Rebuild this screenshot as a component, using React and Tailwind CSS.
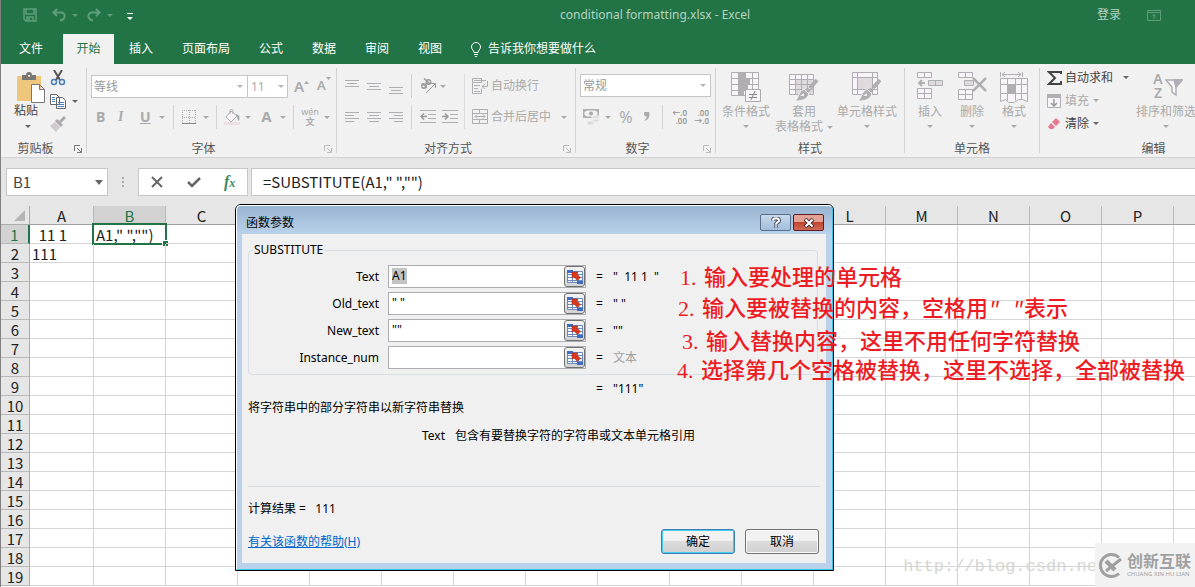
import clsx from "clsx";

const columns = "ABCDEFGHIJKLMNOPQRSTUVWXYZ".split("");
const rows = Array.from({ length: 19 }, (_, i) => i + 1);
const cells = { A1: "  11 1", B1: 'A1," ","")', A2: "111" };

const tabs = ["插入", "页面布局", "公式", "数据", "审阅", "视图"];

const args = [
    { id: "text", label: "Text", value: "A1", result: '"  11 1  "', selected: true },
    { id: "old_text", label: "Old_text", value: '" "', result: '" "' },
    { id: "new_text", label: "New_text", value: '""', result: '""' },
    { id: "instance_num", label: "Instance_num", value: "", result: "文本", muted: true },
];

const Caret = ({ className }) => (
    <svg className={clsx("shrink-0", className)} width="6" height="3" viewBox="0 0 6 3" fill="currentColor">
        <path d="M0 0h6L3 3z" />
    </svg>
);

const Sep = ({ className }) => <span className={clsx("w-px h-6 shrink-0 bg-[#d2d2d2]", className)} />;

const Icon = ({ w = 16, h = 16, children, className }) => (
    <svg className={clsx("shrink-0", className)} width={w} height={h} viewBox={`0 0 ${w} ${h}`} fill="none" stroke="#b0aeb2">
        {children}
    </svg>
);

const Tool = ({ label, className, children }) => (
    <button aria-label={label} className={clsx("flex items-center shrink-0", className)}>{children}</button>
);

function Group({ title, className, launcher, children }) {
    return (
        <section className={clsx("relative flex flex-col shrink-0 mt-1 h-[85px] whitespace-nowrap border-r border-[#d2d2d2]", className)}>
            <div className="h-[73px] shrink-0">{children}</div>
            <h2 className={clsx("text-center leading-4 text-[#555]", launcher && "pr-4")}>{title}</h2>
            {launcher && (
                <button aria-label={`${title}设置`} className="absolute right-1 bottom-0">
                    <svg width="8" height="8" viewBox="0 0 8 8" fill="none" stroke={launcher}>
                        <path d="M.5 6V.5H6M3 3l4 4M7.500 3v4.500H3" />
                    </svg>
                </button>
            )}
        </section>
    );
}

const Lines = ({ d }) => (
    <Icon w={14} h={16}><path d={d} /></Icon>
);

function TitleBar() {
    return (
        <header className="relative flex items-center h-[34px] pb-1 pl-[22px] text-[#5f9d7b]">
            <Tool label="保存">
                <Icon w={14} h={14}>
                    <path stroke="#5f9d7b" strokeWidth="1.500" d="M1 1h12v12H3l-2-2zM3 1v5h8V1M4 13V9h6v4M6 10v3" />
                </Icon>
            </Tool>
            <Tool label="撤消" className="ml-[15px]">
                <Icon w={14} h={14}>
                    <path stroke="#5f9d7b" strokeWidth="2" d="M5 1L1.500 4.500 5 8M2 4.500h7c5 0 5 7-1 8" />
                </Icon>
            </Tool>
            <Caret className="ml-[6px]" />
            <Tool label="恢复" className="ml-[9px]">
                <Icon w={14} h={14}>
                    <path stroke="#5f9d7b" strokeWidth="2" d="M9 1l3.500 3.500L9 8M12 4.500H5c-5 0-5 7 1 8" />
                </Icon>
            </Tool>
            <Caret className="ml-[6px]" />
            <Tool label="自定义快速访问工具栏" className="ml-[14px] mt-[2px]">
                <svg width="6" height="7" viewBox="0 0 6 7" fill="#fff"><path d="M0 0h6v1H0zM0 4h6L3 7z" /></svg>
            </Tool>
            <h1 className="flex-1 mr-6 pl-[427px] whitespace-nowrap text-[#b5d3c2]">conditional formatting.xlsx - Excel</h1>
            <button className="text-[#b5d3c2]">登录</button>
            <Tool label="功能区显示选项" className="ml-[26px] mr-[34px]">
                <Icon w={14} h={12}>
                    <path stroke="#5f9d7b" d="M.5 1.500h13v10H.5zM.5 3.500h13M7 10V5.500M5 7.500l2-2 2 2" />
                </Icon>
            </Tool>
        </header>
    );
}

function TabBar() {
    return (
        <nav className="flex h-[30px] items-stretch text-white">
            <button className="w-[62px] pr-[2px]">文件</button>
            <button className="w-[51px] mr-px bg-[#f1f1f1] text-[#227447]">开始</button>
            {tabs.map((tab) => (
                <button key={tab} className="px-[14px] mr-px">{tab}</button>
            ))}
            <button className="flex items-center gap-[6px] ml-[13px]">
                <Icon w={12} h={15} >
                    <path stroke="#fff" d="M4 10.500c0-2-2.500-3-2.500-5.500a4.500 4.500 0 0 1 9 0c0 2.500-2.500 3.500-2.500 5.500zM4 12.500h4M5 14.500h2" />
                </Icon>
                告诉我你想要做什么
            </button>
        </nav>
    );
}

function Clipboard() {
    return (
        <Group title="剪贴板" className="w-[86px]" launcher="#777">
            <div className="flex">
                <button className="flex flex-col items-center w-[42px] shrink-0 ml-1 pt-1 text-[#444]">
                    <svg className="ml-[10px]" width="30" height="31" viewBox="0 0 30 31">
                        <path fill="#eec77d" d="M1 4h24v25H1z" />
                        <path fill="#777" d="M6 3h4a3 3 0 0 1 6 0h4v5H6zM12 3h2v2h-2z" fillRule="evenodd" />
                        <path fill="#fff" stroke="#777" d="M15.500 12.500h8l5 5v13h-13zM23.500 12.500v5h5" />
                    </svg>
                    <span className="leading-4">粘贴</span>
                    <Caret className="mt-[6px] ml-1 text-[#666]" />
                </button>
                <div className="flex flex-col gap-[7px] pt-[2px] ml-[3px]">
                    <Tool label="剪切">
                        <Icon><path stroke="#555" strokeWidth="2" d="M4 0l6 10M12 0L6 10" /><circle cx="4" cy="12" r="2.500" stroke="#4a80b8" strokeWidth="1.500" /><circle cx="12" cy="12" r="2.500" stroke="#4a80b8" strokeWidth="1.500" /></Icon>
                    </Tool>
                    <Tool label="复制">
                        <Icon><path fill="#fff" stroke="#666" d="M.5 1.500h6l3 3v7h-9zM6.500 4.500h6l3 3v8h-9z" /><path stroke="#4a80b8" d="M2 4.500h3M2 6.500h3M2 8.500h3M8 9.500h6M8 11.500h6M8 13.500h6" /></Icon>
                        <Caret className="ml-[6px] text-[#666]" />
                    </Tool>
                    <Tool label="格式刷">
                        <Icon><path stroke="#aaa" strokeWidth="3" d="M15 1l-5 5" /><path stroke="#aaa" strokeWidth="3" d="M6 4l6 6" /><path fill="#cfcacf" stroke="none" d="M5 6l5 5-4 5-6-6z" /></Icon>
                    </Tool>
                </div>
            </div>
        </Group>
    );
}

function FontGroup() {
    return (
        <Group title="字体" className="w-[250px]" launcher="#bbb">
            <div className="flex items-center h-6 mt-[6px] ml-1">
                <div className="relative">
                    <select aria-label="字体" className="block appearance-none w-[157px] h-[23px] pl-[2px] pt-px bg-white border border-[#c6c6c6] text-[#999]">
                        <option>等线</option>
                    </select>
                    <Caret className="absolute right-[5px] top-[10px] text-[#b5b5b5]" />
                </div>
                <div className="relative">
                    <select aria-label="字号" className="block appearance-none w-10 h-[23px] pl-[3px] pt-px bg-white border border-l-0 border-[#c6c6c6] text-[#aaa]">
                        <option>11</option>
                    </select>
                    <Caret className="absolute right-[4px] top-[10px] text-[#b5b5b5]" />
                </div>
                <button aria-label="增大字号" className="flex w-[23px] ml-[6px] text-[15px] font-semibold text-[#aaa]">A<svg className="mt-[5px]" width="5" height="3" fill="#aaa"><path d="M0 3h5L2.500 0z" /></svg></button>
                <button aria-label="减小字号" className="flex text-[13px] font-semibold text-[#aaa]">A<svg width="5" height="3" fill="#aaa"><path d="M0 0h5L2.500 3z" /></svg></button>
            </div>
            <div className="flex items-center h-6 mt-[7px] pl-[9px] text-[#aaa] text-sm">
                <button className="w-[22px] text-left font-bold">B</button>
                <button className="w-[22px] text-left italic font-['Liberation_Serif',serif] font-bold">I</button>
                <button className="w-[19px] text-left font-bold underline">U</button>
                <Caret />
                <Sep className="ml-2" />
                <Tool label="边框" className="ml-2">
                    <Icon w={14} h={14}><path strokeDasharray="1 1" d="M0 .5h14M.5 0v13M7.500 0v13M13.500 0v13M0 7.500h14" /><path stroke="#888" d="M0 13.500h14" /></Icon>
                </Tool>
                <Caret className="ml-[7px]" />
                <Sep className="ml-[7px]" />
                <Tool label="填充颜色" className="ml-[7px]">
                    <Icon><path fill="#f7f3f7" d="M7 2l6 5-6 6-5-5zM6 5V1.500c0-1.500 3-1.500 3 0V5" /><path fill="#aaa" stroke="none" d="M12 5c4 1 4 4 3 7-2-1-1-4-3-5z" /><path stroke="#ebe1e4" strokeWidth="3" d="M0 14.500h16" /></Icon>
                </Tool>
                <Caret className="ml-[5px]" />
                <button className="ml-[10px] w-[11px] text-[15px] font-bold">A</button>
                <Caret className="ml-[8px]" />
                <Sep className="ml-[7px]" />
                <button aria-label="拼音" className="flex flex-col items-center w-[18px] ml-[7px] text-[9px] leading-[10px]">
                    <span>wén</span>
                    <span className="font-bold">文</span>
                </button>
                <Caret className="ml-[5px]" />
            </div>
        </Group>
    );
}

function AlignGroup() {
    return (
        <Group title="对齐方式" className="w-[239px]" launcher="#bbb">
            <div className="flex">
                <div className="ml-2">
                    <div className="flex items-center gap-2 h-6 mt-[6px]">
                        <Tool label="顶端对齐"><Lines d="M0 2.500h14M2 5.500h10M0 8.500h14" /></Tool>
                        <Tool label="垂直居中"><Lines d="M0 5.500h14M2 8.500h10M0 11.500h14" /></Tool>
                        <Tool label="底端对齐"><Lines d="M0 9.500h14M2 12.500h10M0 15.500h14" /></Tool>
                        <Sep />
                        <Tool label="方向" className="text-[#aaa]">
                            <Icon>
                                <g strokeWidth="1.500" stroke="#999">
                                    <circle cx="4" cy="8" r="2.200" />
                                    <path d="M2 5.500l5 4" />
                                    <circle cx="8.500" cy="4" r="2.200" />
                                    <path d="M4 .5l6 5.500" />
                                </g>
                                <path stroke="#999" d="M6 15l9-9M11 5.500h4.500V10" />
                            </Icon>
                            <Caret className="ml-1" />
                        </Tool>
                    </div>
                    <div className="flex items-center gap-2 h-6 mt-[7px]">
                        <Tool label="左对齐"><Lines d="M0 3.500h14M0 6.500h9M0 9.500h14M0 12.500h9" /></Tool>
                        <Tool label="居中"><Lines d="M0 3.500h14M2 6.500h10M0 9.500h14M2 12.500h10" /></Tool>
                        <Tool label="右对齐"><Lines d="M0 3.500h14M5 6.500h9M0 9.500h14M5 12.500h9" /></Tool>
                        <Sep />
                        <Tool label="减少缩进量"><Icon><path d="M0 1.500h16M8 5.500h8M8 9.500h8M0 13.500h16" /><path stroke="#999" strokeWidth="1.500" d="M7 7.500H1M4 4.500l-3 3 3 3" /></Icon></Tool>
                        <Tool label="增加缩进量" className="-ml-[2px]"><Icon><path d="M0 1.500h16M8 5.500h8M8 9.500h8M0 13.500h16" /><path stroke="#999" strokeWidth="1.500" d="M0 7.500h6M3 4.500l3 3-3 3" /></Icon></Tool>
                    </div>
                </div>
                <span className="w-px h-[55px] shrink-0 mt-[6px] ml-[6px] bg-[#dcdcdc]" />
                <div className="ml-[7px] text-[#aaa]">
                    <button className="flex items-center gap-[3px] h-6 mt-[6px]">
                        <Icon><path d="M.5.500h9v4h-9zM.5 4.500v11h9v-5M2 2.500h12M2 7.500h6M2 10.500h4M2 13.500h6M15.500 3v5.500h-5M13 6l-3 2.500 3 2.500" /></Icon>
                        自动换行
                    </button>
                    <button className="flex items-center gap-[3px] h-6 mt-[7px]">
                        <Icon><path d="M.5.500h15v14H.5zM.5 4.500h15M.5 10.500h15M7.500.500v4M7.500 10.500v4M3 7.500h10M5 5.500l-2 2 2 2M11 5.500l2 2-2 2" /></Icon>
                        合并后居中
                        <Caret className="ml-[7px]" />
                    </button>
                </div>
            </div>
        </Group>
    );
}

function NumberGroup() {
    return (
        <Group title="数字" className="w-[140px]" launcher="#bbb">
            <div className="relative w-[131px] h-6 mt-[6px] ml-1">
                <select aria-label="数字格式" className="appearance-none w-full h-[23px] pl-[2px] pt-px bg-white border border-[#c6c6c6] text-[#999]">
                    <option>常规</option>
                </select>
                <Caret className="absolute right-[5px] top-[10px] text-[#b5b5b5]" />
            </div>
            <div className="flex items-center h-6 mt-[7px] pl-[7px] text-[#aaa]">
                <Tool label="会计数字格式">
                    <Icon>
                        <path fill="#b0aeb2" stroke="none" fillRule="evenodd" d="M0 0h16v9H0zM4 1.500L1.500 3v3L4 7.500h8L14.500 6V3L12 1.500z" />
                        <circle cx="8" cy="4.500" r="2" fill="#aaa" stroke="none" />
                        <path fill="#ddd6dc" stroke="#f1f1f1" d="M9 7h7v3H9zM9 10h7v3H9zM4 12h7v4H4z" />
                    </Icon>
                </Tool>
                <Caret className="ml-[6px]" />
                <button aria-label="百分比" className="w-[14px] ml-2 text-base">%</button>
                <Tool label="千位分隔" className="ml-[11px]">
                    <Icon w={6} h={10}><path fill="#aaa" stroke="none" d="M0 2a2.500 2.500 0 0 1 5.500 0c0 4-2 6-5 7V8c1.500-.8 2.200-2 2-3.500C1 4.500 0 3.500 0 2z" /></Icon>
                </Tool>
                <Sep className="ml-[12px]" />
                <Tool label="增加小数位数" className="ml-2"><DecimalIcon top="←.0" bottom=".00" /></Tool>
                <Tool label="减少小数位数" className="ml-[6px]"><DecimalIcon top=".00" bottom="→.0" /></Tool>
            </div>
        </Group>
    );
}

const DecimalIcon = ({ top, bottom }) => (
    <span className="flex flex-col items-end w-4 text-[8px] leading-[8px] font-semibold text-[#999]">
        <span>{top}</span>
        <span>{bottom}</span>
    </span>
);

const Brush = () => (
    <>
        <path stroke="#b0aeb2" strokeWidth="4" d="M28 8l-7 8" />
        <path stroke="#b0aeb2" strokeWidth="4" d="M20 17l-3 3" />
        <path fill="#b0aeb2" stroke="#f1f1f1" d="M15 17l5 5c-2 6-8 7-14 7 4-3 3-9 9-12z" />
        <path fill="#f1f1f1" stroke="none" d="M11 24l4-3v3z" />
    </>
);

const bigIcons = {
    conditional: (
        <Icon w={30} h={30}>
            <path fill="#f8f4f9" d="M.5.500h27v23H.5zM.5 6.500h27M.5 12.500h27M.5 18.500h27M7.500.500v23M14.500.500v23M21.500.500v23" />
            <path fill="#b0aeb2" stroke="none" d="M8 1h6v5H8zM8 7h11v5H8zM8 13h9v5H8zM8 19h5v5H8z" />
            <path fill="#f8f4f9" stroke="#aaa" d="M14.500 17.500h15v12h-15z" />
            <path stroke="#888" d="M18 22.500h8M18 25.500h8M24 19l-4 9" />
        </Icon>
    ),
    table: (
        <Icon w={30} h={30}>
            <path fill="#f8f4f9" d="M.5 2.500h24v20H.5z" />
            <path fill="#dedade" stroke="none" d="M7 8h18v15H7z" />
            <path d="M.5 2.500h24v20H.5zM.5 7.500h24M.5 12.500h24M.5 17.500h24M6.500 2.500v20M12.500 2.500v20M18.500 2.500v20" />
            <Brush />
        </Icon>
    ),
    cell: (
        <Icon w={30} h={30}>
            <path fill="#f8f4f9" d="M.5.500h25v22H.5zM.5 5.500h25M.5 17.500h25M5.500.500v22M20.500.500v22" />
            <path fill="#dedade" stroke="none" d="M6 6h14v11H6z" />
            <Brush />
        </Icon>
    ),
    insert: (
        <Icon w={28} h={30}>
            <path fill="#f8f4f9" d="M1.500.500h14v5h-14zM8.500.500v5M1.500 16.500h14v10h-14zM8.500 16.500v10M1.500 21.500h14" />
            <path fill="#dedade" d="M12.500 8.500h14v5h-14zM19.500 8.500v5" />
            <path strokeWidth="2" d="M9 11H3M6 8l-3 3 3 3" />
        </Icon>
    ),
    remove: (
        <Icon w={30} h={30}>
            <path fill="#f8f4f9" d="M1.500.500h14v5h-14zM8.500.500v5M1.500 17.500h14v10h-14zM8.500 17.500v10M1.500 22.500h14" />
            <path fill="#dedade" d="M7.500 8.500h9v5h-9z" />
            <path strokeWidth="2.500" d="M16 6l13 13M29 6L16 19" />
        </Icon>
    ),
    format: (
        <Icon w={28} h={31}>
            <path d="M.5 0v5M22.500 0v5M2 2.500h19M5 0L2 2.500 5 5M18 0l3 2.500L18 5" />
            <path fill="#f8f4f9" d="M.5 6.500h27v23l-5-2h-4l-4 3h-6l-3-3-5 2zM.5 12.500h27M.5 21.500h27M7.500 6.500v22M15.500 6.500v22M21.500 6.500v21" />
            <path fill="#b0aeb2" stroke="none" d="M8 12h8v10H8z" />
        </Icon>
    ),
};

function BigButton({ icon, label, second, className }) {
    return (
        <button className={clsx("flex flex-col items-center shrink-0 pt-1 leading-4 text-[#aaa]", className)}>
            <span className="h-8">{bigIcons[icon]}</span>
            <span>{label}</span>
            {second ? (
                <span className="flex items-center gap-1 -mt-px">{second}<Caret /></span>
            ) : (
                <Caret className="mt-[5px]" />
            )}
        </button>
    );
}

function EditGroup() {
    return (
        <Group title="编辑" className="w-[228px]">
            <div className="flex">
                <div className="flex flex-col items-start ml-[7px] -mt-[2px] w-[88px] text-[#444]">
                    <button className="flex items-center h-[23px]">
                        <Icon w={15} className="mr-[3px]"><path stroke="#444" strokeWidth="2" d="M14 4V2H2l6 6-6 6h12v-3" /></Icon>
                        自动求和
                        <Caret className="ml-[10px] text-[#666]" />
                    </button>
                    <button className="flex items-center h-[23px] text-[#aaa]">
                        <Icon w={15} className="mr-[3px]"><path d="M.5 1.500h13v13H.5z" fill="#f8f4f9" /><path fill="#b0aeb2" stroke="none" d="M0 1h14v4H0z" /><path stroke="#999" strokeWidth="1.500" d="M7 6v7M4 10l3 3 3-3" /></Icon>
                        填充
                        <Caret className="ml-1" />
                    </button>
                    <button className="flex items-center h-[23px]">
                        <Icon w={15} className="mr-[3px]"><path fill="#e5798f" stroke="none" d="M9 2l4 4-4 4-4-4zM4 7l4 4-2 2H3L1 11z" /></Icon>
                        清除
                        <Caret className="ml-1 text-[#666]" />
                    </button>
                </div>
                <button className="flex flex-col items-center w-[62px] pt-1 leading-4 text-[#aaa]">
                    <span className="flex h-8 ml-1">
                        <span className="flex flex-col text-sm font-semibold leading-[14px]"><span>A</span><span>Z</span></span>
                        <svg className="mt-[7px] ml-[2px]" width="18" height="18" viewBox="0 0 18 18" fill="#f8f4f9" stroke="#b0aeb2" strokeWidth="1.500">
                            <path d="M1 1h16l-6 7v8l-4-3V8z" />
                            <path fill="#b0aeb2" d="M9 1h8l-6 7z" />
                        </svg>
                    </span>
                    排序和筛选
                    <Caret className="mt-[5px]" />
                </button>
            </div>
        </Group>
    );
}

function Ribbon() {
    return (
        <div className="flex h-[94px] shrink-0 overflow-hidden bg-[#f1f1f1] border-b border-[#d2d2d2]">
            <Clipboard />
            <FontGroup />
            <AlignGroup />
            <NumberGroup />
            <Group title="样式" className="w-[189px]">
                <div className="flex ml-[6px]">
                    <BigButton icon="conditional" label="条件格式" className="w-12" />
                    <BigButton icon="table" label="套用" second="表格格式" className="w-[58px] ml-[5px]" />
                    <BigButton icon="cell" label="单元格样式" className="w-[60px] ml-1" />
                </div>
            </Group>
            <Group title="单元格" className="w-[135px]">
                <div className="flex ml-1">
                    <BigButton icon="insert" label="插入" className="w-[42px]" />
                    <BigButton icon="remove" label="删除" className="w-[42px]" />
                    <BigButton icon="format" label="格式" className="w-[42px]" />
                </div>
            </Group>
            <EditGroup />
        </div>
    );
}

function FormulaBar() {
    return (
        <div className="flex items-center h-12 shrink-0 pl-[5px] text-[#444]">
            <div className="flex items-center w-[102px] h-7 bg-white border border-[#c6c6c6]">
                <input aria-label="名称框" className="w-[88px] pl-[6px] font-['Noto_Sans_CJK_SC',sans-serif] text-[15px] outline-none" defaultValue="B1" />
                <button aria-label="名称列表"><svg width="8" height="5" fill="#666"><path d="M0 0h8L4 5z" /></svg></button>
            </div>
            <svg className="ml-[14px]" width="2" height="10" fill="#aaa"><path d="M0 0h2v2H0zM0 4h2v2H0zM0 8h2v2H0z" /></svg>
            <div className="flex items-center w-[110px] h-7 ml-[14px] bg-white border border-[#c6c6c6]">
                <Tool label="取消输入" className="ml-3"><Icon w={12} h={12}><path stroke="#666" strokeWidth="2" d="M1 1l10 10M11 1L1 11" /></Icon></Tool>
                <Tool label="输入" className="ml-6"><Icon w={14} h={12}><path stroke="#666" strokeWidth="2.500" d="M1 6l4 4 8-8" /></Icon></Tool>
                <button aria-label="插入函数" className="ml-[23px] font-['Liberation_Serif',serif] italic font-bold text-base text-[#3b8a5e]">f<span className="text-xs">x</span></button>
            </div>
            <input
                aria-label="编辑栏"
                className="flex-1 h-7 ml-[3px] pl-[11px] pb-[2px] bg-white border border-r-0 border-[#c6c6c6] font-['Noto_Sans_CJK_SC',sans-serif] text-[15px] text-[#222] outline-none"
                defaultValue={'=SUBSTITUTE(A1," ","")'}
            />
        </div>
    );
}

function Sheet() {
    return (
        <div className="flex-1 overflow-hidden bg-white">
            <table className="table-fixed w-full border-separate border-spacing-0 font-['Noto_Sans_CJK_SC',sans-serif] text-[15px] leading-4 text-[#222]">
                <colgroup>
                    <col className="w-[29px]" />
                    {columns.map((c) => <col key={c} className={c === "A" ? "w-16" : "w-[72px]"} />)}
                </colgroup>
                <thead>
                    <tr className="h-[19px]">
                        <th className="p-0 bg-[#e6e6e6] border-r border-b border-[#ababab]">
                            <svg className="ml-auto mr-1" width="11" height="11" fill="#b5b5b5"><path d="M11 0v11H0z" /></svg>
                        </th>
                        {columns.map((c) => (
                            <th
                                key={c}
                                className={clsx(
                                    "p-0 pt-[2px] h-[19px] font-normal border-r border-b border-r-[#b8b8b8] border-b-[#9f9f9f]",
                                    c === "B" ? "bg-[#d2d2d2] text-[#227447]" : "bg-[#e6e6e6]"
                                )}
                            >{c}</th>
                        ))}
                    </tr>
                </thead>
                <tbody>
                    {rows.map((r) => (
                        <tr key={r} className="h-[19px]">
                            <th
                                className={clsx(
                                    "p-0 pt-[2px] h-[19px] font-normal border-b border-b-[#b8b8b8]",
                                    r === 1 ? "bg-[#d2d2d2] text-[#227447] border-r-2 border-r-[#227447]" : "bg-[#e6e6e6] border-r border-r-[#ababab]"
                                )}
                            >{r}</th>
                            {columns.map((c) => (
                                <td key={c} className="relative p-0 pt-[2px] pl-[2px] h-[19px] whitespace-pre border-r border-b border-[#d4d4d4]">
                                    {cells[c + r]}
                                    {c + r === "B1" && (
                                        <span className="absolute -left-[2px] -right-[2px] -top-[2px] -bottom-[2px] border-2 border-[#227447]">
                                            <span className="absolute -right-[3px] -bottom-[3px] size-[6px] bg-[#227447] border-l border-t border-white" />
                                        </span>
                                    )}
                                </td>
                            ))}
                        </tr>
                    ))}
                </tbody>
            </table>
        </div>
    );
}

function RefButton({ label }) {
    return (
        <button
            aria-label={`选择 ${label}`}
            className="flex items-center justify-center w-[21px] h-[21px] shrink-0 rounded-[3px] border border-[#707070] bg-linear-to-b from-[#f4f4f4] to-[#d2d2d2]"
        >
            <svg width="16" height="14" viewBox="0 0 16 14">
                <path fill="#fff" stroke="#6c89bd" d="M.5 1.500h15v11H.5zM.5 4.500h15M.5 7.500h15M.5 10.500h15M5.500 1v12M10.500 1v12" />
                <path fill="#3f6bc4" d="M0 0h6v3H0zM10 11h6v3h-6z" />
                <path fill="#d9381e" stroke="#9c2412" strokeWidth=".5" d="M5 2h6L9.500 3.500l4 4-3 3-4-4L5 8z" />
            </svg>
        </button>
    );
}

function FunctionDialog() {
    return (
        <div
            role="dialog"
            aria-label="函数参数"
            className="absolute left-[234px] top-[204px] w-[599px] rounded-t-md border border-black bg-[#b9d1ea] text-black"
        >
            <div className="rounded-t-[5px] border border-t-white border-l-white border-r-[#35c6ea] border-b-[#35c6ea] pl-[5px] pr-[6px] pb-[6px] bg-linear-to-b from-[#99b4d1] to-[#b9d1ea] to-[28px]">
                <div className="flex items-center h-7 pl-1 pt-[5px]">
                    <span className="flex-1">函数参数</span>
                    <button aria-label="帮助" className="w-[31px] h-[17px] rounded-xs border border-[#5a6f8c] bg-linear-to-b from-[#c5d8ec] to-[#a3bedb] flex items-center justify-center">
                        <svg width="10" height="11" viewBox="0 0 10 11" fill="none">
                            <path stroke="#3c4a60" strokeWidth="4" d="M2 3.500c0-3 6-3 6 0C8 5.500 5 5 5 7.500M5 8.500v2" />
                            <path stroke="#fff" strokeWidth="2" d="M2 3.500c0-3 6-3 6 0C8 5.500 5 5 5 7.500M5 8.800v1.500" />
                        </svg>
                    </button>
                    <button aria-label="关闭" className="w-[31px] h-[17px] ml-[2px] mr-[2px] rounded-xs border border-[#5c1e22] bg-linear-to-b from-[#e3a295] from-45% via-[#c2452f] via-50% to-[#cf6a55] flex items-center justify-center">
                        <svg width="12" height="10" viewBox="0 0 12 10" fill="none">
                            <path stroke="#4b3238" strokeWidth="4" d="M2 1l8 8M10 1L2 9" />
                            <path stroke="#fff" strokeWidth="2" d="M2.500 1.500l7 7M9.500 1.500l-7 7" />
                        </svg>
                    </button>
                </div>

                <div className="px-[6px] pt-2 pb-[9px] bg-[#f0f0f0]">
                    <fieldset className="mr-[2px] h-[133px] rounded-sm border border-[#d5dfe5] px-0">
                        <legend className="ml-1 px-px leading-4">SUBSTITUTE</legend>
                        <div className="flex flex-col gap-1 mt-[7px]">
                            {args.map((arg) => (
                                <div key={arg.id} className="flex items-center h-[23px]">
                                    <label htmlFor={arg.id} className="w-[130px] text-right">{arg.label}</label>
                                    <div className="flex w-[198px] h-[23px] ml-[9px] pl-[3px] bg-white border border-[#abadb3]">
                                        <div className="flex-1">
                                            <input
                                                id={arg.id}
                                                className={clsx("block h-4 mt-[2px] outline-none", arg.selected ? "field-sizing-content bg-[#c3c3c3]" : "w-full")}
                                                defaultValue={arg.value}
                                            />
                                        </div>
                                        <RefButton label={arg.label} />
                                    </div>
                                    <span className="w-[17px] ml-[10px]">=</span>
                                    <span className={clsx("whitespace-pre", arg.muted && "text-[#a0a0a0]")}>{arg.result}</span>
                                </div>
                            ))}
                        </div>
                    </fieldset>
                    <p className="flex ml-[348px] mt-[6px] leading-4"><span className="w-[17px]">=</span>"111"</p>
                    <p className="mt-[3px] leading-4">将字符串中的部分字符串以新字符串替换</p>
                    <p className="flex gap-[10px] ml-[174px] mt-3 leading-4"><span>Text</span>包含有要替换字符的字符串或文本单元格引用</p>
                    <hr className="mt-[42px] border-[#d5dfe5]" />
                    <p className="mt-[14px] leading-4 whitespace-pre">计算结果 =   111</p>
                    <div className="flex items-center mt-3">
                        <a href="#help" className="flex-1 underline text-[#0066cc]">有关该函数的帮助(H)</a>
                        <button className="w-[74px] h-[25px] rounded-[3px] border border-[#3c7fb1] ring-1 ring-inset ring-[#43cdf3] bg-linear-to-b from-[#f2f2f2] from-45% via-[#dcdcdc] via-50% to-[#d0d0d0]">确定</button>
                        <button className="w-[74px] h-[25px] ml-[10px] mr-px rounded-[3px] border border-[#707070] ring-1 ring-inset ring-[#fafafa] bg-linear-to-b from-[#f2f2f2] from-45% via-[#dcdcdc] via-50% to-[#d0d0d0]">取消</button>
                    </div>
                </div>
            </div>
        </div>
    );
}

function Note({ n, className, children }) {
    return (
        <p className={clsx("absolute flex items-baseline whitespace-nowrap font-['Noto_Sans_CJK_SC',sans-serif] font-medium text-[22px] leading-6 text-[#ed1c24]", className)}>
            <span className="w-6 font-['Liberation_Serif',serif]">{n}.</span>
            {children}
        </p>
    );
}

function Watermark() {
    return (
        <>
            <p className="absolute right-[98px] bottom-[8px] font-['Liberation_Mono',monospace] text-[17px] leading-6 text-[#d6d6d2]">http://blog.csdn.ne</p>
            <div className="absolute right-0 bottom-0 flex items-center gap-1 w-[100px] h-11 pl-[3px] bg-[#f2f2f2] text-[#a0a0a0]">
                <svg width="25" height="25" viewBox="0 0 25 25" fill="none" stroke="currentColor">
                    <path strokeWidth="3" d="M21 4.500a11 11 0 1 0 0 16" />
                    <path strokeWidth="4.500" d="M8 8l9 9" />
                    <path strokeWidth="3" d="M23 6L8 18" />
                </svg>
                <div className="whitespace-nowrap">
                    <div className="text-[16px] leading-[18px] font-bold">创新互联</div>
                    <div className="text-[6px] leading-[8px]">CHUANG XIN HU LIAN</div>
                </div>
            </div>
        </>
    );
}

export default function App() {
    return (
        <div className="relative flex flex-col h-screen overflow-hidden border-l border-[#808080] bg-[#e6e6e6] font-['Noto_Sans','Noto_Sans_CJK_SC',sans-serif] text-xs">
            <div className="shrink-0 bg-[#227447]">
                <TitleBar />
                <TabBar />
            </div>
            <Ribbon />
            <FormulaBar />
            <Sheet />
            <FunctionDialog />
            <Note n={1} className="left-[679px] top-[263px]">输入要处理的单元格</Note>
            <Note n={2} className="left-[677px] top-[294px]">
                输入要被替换的内容，空格用<span className="whitespace-pre italic font-['Liberation_Mono',monospace] text-xl leading-6">" "</span>表示
            </Note>
            <Note n={3} className="left-[681px] top-[327px]">输入替换内容，这里不用任何字符替换</Note>
            <Note n={4} className="left-[676px] top-[356px]">选择第几个空格被替换，这里不选择，全部被替换</Note>
            <Watermark />
        </div>
    );
}
